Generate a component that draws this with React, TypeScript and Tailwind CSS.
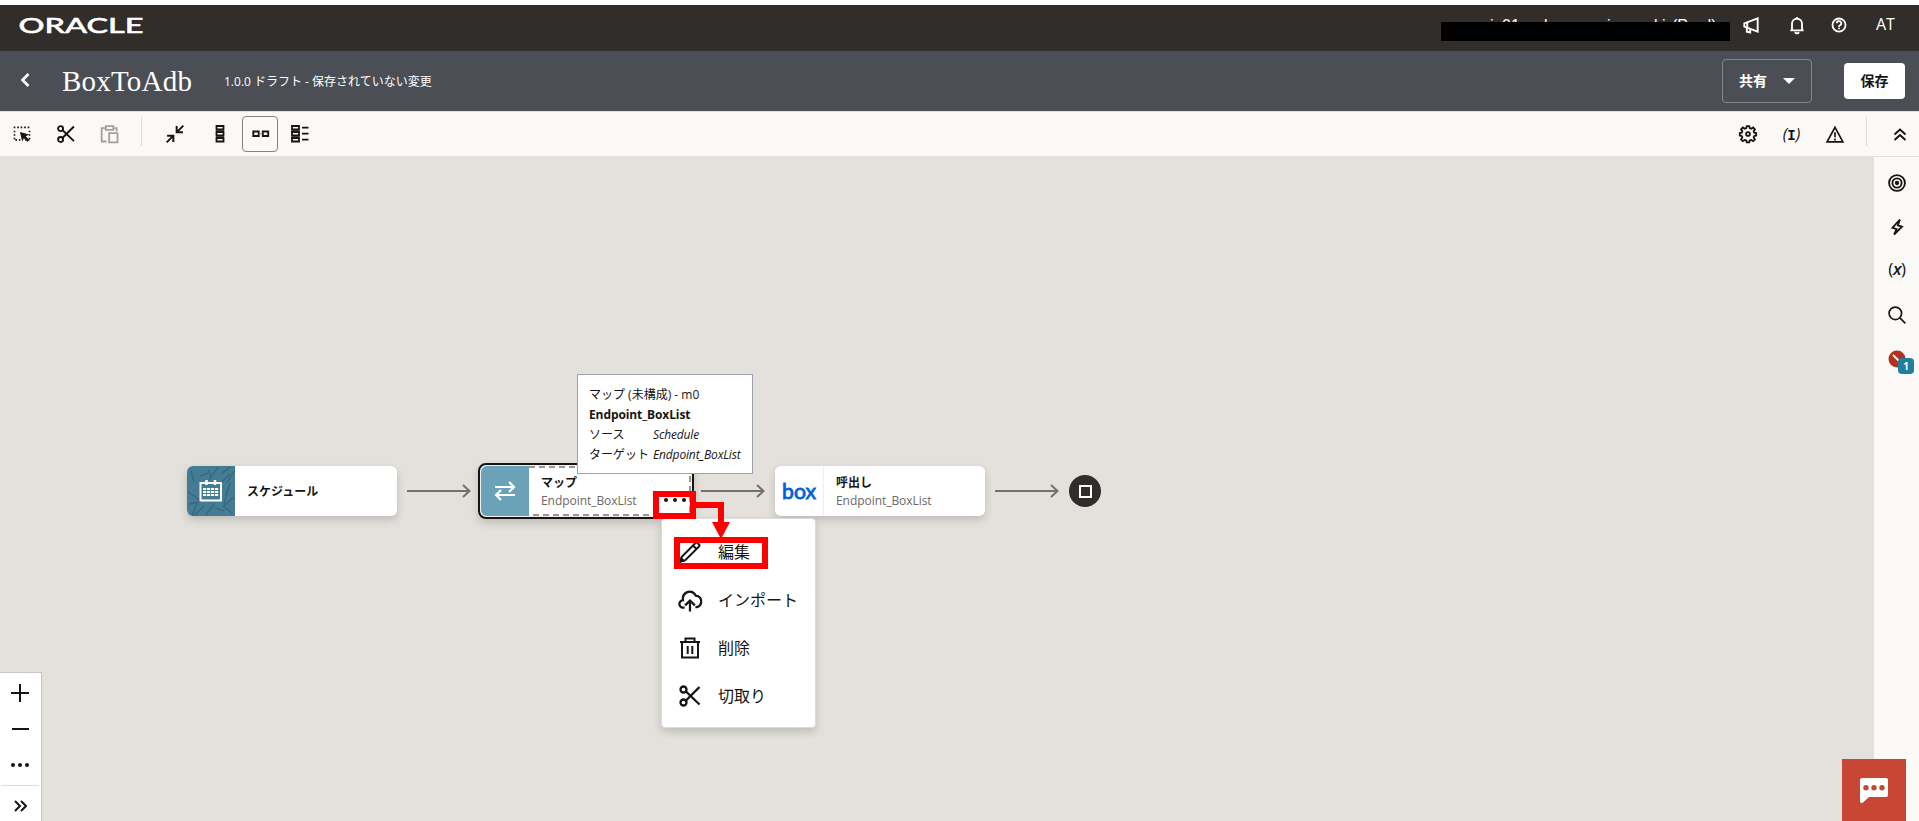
import React from 'react';

interface IconProps {
  className?: string;
  size?: number;
}

interface StrokeIconProps extends IconProps {
  children: React.ReactNode;
  width?: number;
}

// Shared 24x24 outline wrapper
const Icon: React.FC<StrokeIconProps> = ({ children, className = '', size = 20, width = 2 }) => (
  <svg
    width={size}
    height={size}
    viewBox="0 0 24 24"
    fill="none"
    stroke="currentColor"
    strokeWidth={width}
    className={`block shrink-0 ${className}`}
  >
    {children}
  </svg>
);

const ScissorsIcon: React.FC<IconProps> = (props) => (
  <Icon width={2.300} {...props}>
    <circle cx="5.5" cy="5.5" r="3" />
    <circle cx="5.5" cy="18.5" r="3" />
    <path d="M8 7.5 21.5 20.5M8 16.5 21.5 3" />
  </Icon>
);

const SelectIcon = () => (
  <Icon>
    <path d="M2 4h20M3 8v12M21 8v12" strokeDasharray="2 2.2" />
    <path d="M4 19h6M16 19h5" strokeDasharray="2 2.2" />
    <path d="M9.500 9.500l11 3-4 2.300 4.300 4.300-2.300 2.300-4.300-4.300-2 3.900z" fill="currentColor" stroke="none" />
  </Icon>
);

const PasteIcon = () => (
  <Icon className="text-[#a3a19f]" width={2.200}>
    <path d="M8 21H2V5h5M17 5h3v4" />
    <path d="M7 2.500h9V7H7z" />
    <path d="M11 11h10v11H11z" />
  </Icon>
);

const CollapseIcon = () => (
  <Icon width={2.400}>
    <path d="M22 2l-7.500 7.500M14 2.500V10h7.500M2 22l7.500-7.500M2.500 14H10v7.500" />
  </Icon>
);

const VerticalIcon = () => (
  <svg width="10" height="18" className="block" fill="none" stroke="currentColor" strokeWidth="1.8">
    <path d="M5 4.500V7M5 10.500V13" strokeWidth="8" stroke="#6b6966" />
    <path d="M1.500 1h7v3.500h-7zM1.500 7h7v3.500h-7zM1.500 13h7v3.500h-7z" fill="#fbf9f8" />
  </svg>
);

const HorizontalIcon = () => (
  <svg width="18" height="8" className="block" fill="none" stroke="currentColor" strokeWidth="1.900">
    <path d="M1.300 1.500h5.400v4.500H1.300zM10.800 1.500h5.400v4.500h-5.400z" />
    <path d="M7 3.700h3.500" strokeWidth="1" stroke="#888" />
  </svg>
);

const DetailIcon = () => (
  <svg width="18" height="18" className="block" fill="none" stroke="currentColor" strokeWidth="1.800">
    <path d="M4.500 4.500V7M4.500 10.500V13" strokeWidth="8" stroke="#6b6966" />
    <path d="M1 1h7v3.500H1zM1 7h7v3.500H1zM1 13h7v3.500H1z" fill="#fbf9f8" />
    <path d="M11 2.700h6.500M11 8.700h6.500M11 14.700h6.500" />
  </svg>
);

const GearIcon = () => (
  <Icon width={2.200}>
    <path d="M10.500 2.500h3l.6 2.500 1.800.7 2.300-1.500 2.100 2.100-1.500 2.300.7 1.800 2.300.5v3l-2.300.5-.7 1.800 1.500 2.300-2.100 2.100-2.300-1.500-1.800.7-.6 2.200h-3l-.6-2.200-1.800-.7-2.300 1.500-2.100-2.100 1.500-2.300-.7-1.800L2.200 13.900v-3l2.300-.5.7-1.800-1.500-2.300 2.100-2.100 2.300 1.500 1.800-.7z" />
    <circle cx="12" cy="12" r="2.300" />
  </Icon>
);

const WarningIcon = () => (
  <Icon>
    <path d="M12 4 21.500 21.500h-19z" />
    <path d="M12 10v6M12 17.500v2.200" />
  </Icon>
);

const MegaphoneIcon = () => (
  <Icon width={2.300}>
    <path d="M20 4v16L4 14v-4zM7 15v5l4 1v-4" />
    <path d="M7.500 9v6" />
  </Icon>
);

const BellIcon = () => (
  <Icon width={2.200}>
    <path d="M4 18.500h16M6 18v-7.500a6 6 0 0 1 12 0V18M12 2.500v2" />
    <path d="M10 20a2 2 0 0 0 4 0" />
  </Icon>
);

const HelpIcon = () => (
  <Icon size={18} width={2.400}>
    <circle cx="12" cy="12" r="8.700" />
    <path d="M9 9.800a3 3 0 1 1 4.400 2.600c-1 .6-1.400 1-1.400 2.100M12 15.800v2" />
  </Icon>
);

const TargetIcon = () => (
  <Icon width={2.200}>
    <circle cx="12" cy="12" r="9.500" />
    <circle cx="12" cy="12" r="5.500" />
    <circle cx="12" cy="12" r="1.500" fill="currentColor" />
  </Icon>
);

const BoltIcon = () => (
  <Icon width={2.200}>
    <path d="M15.500 3 6.500 13l5 1.500-3 6.500 9.500-9.500-5-1.500z" />
  </Icon>
);

const SearchIcon = () => (
  <Icon>
    <circle cx="10" cy="10" r="7.500" />
    <path d="m15.500 15.500 6.500 6.500" />
  </Icon>
);

const CalendarIcon = () => (
  <svg width="24" height="24" className="relative block" fill="none" stroke="white">
    <path d="M1.500 4h20.500v17.500H1.500z" strokeWidth="2" />
    <path d="M7.500 1v5M16 1v5" strokeWidth="2.500" />
    <path d="M4 10h15.500M4 13h15.500M4 16h15.500" strokeWidth="1.800" strokeDasharray="3.200 .8" />
  </svg>
);

const SwapIcon = () => (
  <svg width="22" height="20" className="block" fill="none" stroke="white" strokeWidth="2.200">
    <path d="M1 6h19M15 1l5 5-5 5M21 14H2M7 9l-5 5 5 5" />
  </svg>
);

const PencilIcon = () => (
  <Icon size={24}>
    <path d="m2.500 21.500 1.300-4.800L17.500 3q1-1 2 0l1.500 1.500q1 1 0 2L7.300 20.200zM15 5.500 18.500 9" />
    <path d="M2.500 21.500l3-.8-2.200-2.200z" fill="currentColor" />
  </Icon>
);

const CloudUpIcon = () => (
  <Icon size={26} width={2.100}>
    <path d="M7 19H4.500C2 18 1.500 15 3 13.500c.8-.9 1.600-1.300 2.500-1.300-.5-3.200 1-6.200 4-7.500 3.200-1.300 6.500.2 7.800 3.300 3.500.2 5.500 2.700 5 6-.3 2.400-2 4.200-4 4.500H17" />
    <path d="M12 22.500v-9M7.500 17 12 12.500l4.500 4.500" />
  </Icon>
);

const TrashIcon = () => (
  <Icon size={24}>
    <path d="M2 6h20M7.500 6V2.500h9V6M4 6v15.500h16V6M9.700 10v8M14.300 10v8" />
  </Icon>
);

const ChatIcon = () => (
  <svg width="28" height="25" viewBox="0 0 28 25" className="block">
    <path d="M2 0h24q2 0 2 2v15q0 2-2 2H9l-6 5.500Q0 26 0 23V2q0-2 2-2z" fill="white" />
    <g fill="#c74634">
      <circle cx="6" cy="9.700" r="2.700" />
      <circle cx="14" cy="9.700" r="2.700" />
      <circle cx="22" cy="9.700" r="2.700" />
    </g>
  </svg>
);

const FlowArrow = () => (
  <svg width="66" height="14" className="mx-[9px] block shrink-0" fill="none" stroke="#76706b" strokeWidth="2">
    <path d="M1 7h62.500M57 1l6.500 6-6.500 6" />
  </svg>
);

const menuItems = [
  { label: '編集', icon: <PencilIcon /> },
  { label: 'インポート', icon: <CloudUpIcon /> },
  { label: '削除', icon: <TrashIcon /> },
  { label: '切取り', icon: <ScissorsIcon size={24} /> },
];

const Header = () => (
  <header className="flex h-[46px] shrink-0 items-start justify-between bg-[#312d2a] text-white">
    <svg width="160" height="46" className="block" role="img" aria-label="Oracle">
      <text
        x="18.500"
        y="27.500"
        fill="white"
        stroke="white"
        strokeWidth=".5"
        fontSize="21.500"
        fontFamily="Lato, sans-serif"
        fontWeight="500"
        textLength="125"
        lengthAdjust="spacingAndGlyphs"
      >
        ORACLE
      </text>
    </svg>
    <div className="flex items-start">
      <div className="relative mt-[11px] h-[25px] w-[289px] text-[16px] leading-5 [font-family:'Liberation_Sans',sans-serif]">
        <div className="flex">
          <span className="ml-[49px] w-[12px]">i</span>
          <span className="w-[42px]">01</span>
          <span className="w-[63px]">l</span>
          <span className="w-[47px]">i</span>
          <span className="w-[18px]">ki</span>
          <span>(Prod)</span>
        </div>
        <div className="absolute top-[6px] left-0 h-[19px] w-[289px] bg-black" />
      </div>
      <div className="mt-[10px] ml-[11px] flex items-center">
        <MegaphoneIcon />
        <span className="ml-[26px]"><BellIcon /></span>
        <span className="ml-[23px]"><HelpIcon /></span>
      </div>
      <span className="mt-[9px] mr-[23px] ml-[28px] w-[20px] text-base leading-5">AT</span>
    </div>
  </header>
);

const TitleBar = () => (
  <div className="flex h-[60px] shrink-0 items-center bg-[#4b4e54] text-white">
    <svg width="12" height="16" className="mt-[-2px] ml-[19px]" fill="none" stroke="white" strokeWidth="2.600">
      <path d="M9.500 2 3.500 8l6 6" />
    </svg>
    <h1 className="ml-[31px] w-[162px] text-[29px] leading-8 tracking-[0.200px] whitespace-nowrap [font-family:'Liberation_Serif',serif]">
      BoxToAdb
    </h1>
    <span className="pt-px text-[12px]">1.0.0 ドラフト - 保存されていない変更</span>
    <button className="ml-auto flex h-[44px] w-[90px] items-center rounded border border-[#85878b] pl-[16px] text-[14px] font-bold">
      <span className="-mt-[2px]">共有</span>
      <svg width="14" height="8" className="ml-[15px]" fill="white">
        <path d="M1 1h12L7 7z" />
      </svg>
    </button>
    <button className="mr-[14px] ml-[32px] h-[36px] w-[61px] rounded bg-white pb-[2px] text-[14px] font-bold text-[#161513]">
      保存
    </button>
  </div>
);

const Toolbar = () => (
  <div className="flex h-[46px] shrink-0 items-center border-y border-[#e3e0dc] bg-[#fbf9f8] pl-[12px]">
    <div className="w-[44px]"><SelectIcon /></div>
    <div className="w-[44px]"><ScissorsIcon /></div>
    <div className="w-[41px]"><PasteIcon /></div>
    <div className="mb-[6px] h-[29px] w-px bg-[#dedbd8]" />
    <div className="ml-[23px]"><CollapseIcon /></div>
    <div className="ml-[30px]"><VerticalIcon /></div>
    <div className="ml-[17px] flex size-[36px] items-center justify-center rounded border border-[#85817e] pl-px">
      <HorizontalIcon />
    </div>
    <div className="ml-[13px]"><DetailIcon /></div>
    <div className="ml-auto"><GearIcon /></div>
    <span className="ml-[24px] w-[19px] text-center text-[16px] font-medium italic">
      (<span className="text-[14px] font-bold not-italic [font-family:'Liberation_Mono',monospace]">I</span>)
    </span>
    <div className="ml-[24px]"><WarningIcon /></div>
    <div className="mb-[6px] ml-[21px] h-[29px] w-px bg-[#dedbd8]" />
    <svg width="14" height="14" className="mr-[12px] ml-[26px]" fill="none" stroke="currentColor" strokeWidth="2">
      <path d="m1.500 7.500 5.500-5 5.500 5M1.500 13 7 8l5.500 5" />
    </svg>
  </div>
);

const NodeTitle = ({ title, sub }: { title: string; sub?: string }) => (
  <div className="flex flex-col justify-center pt-[2px] pl-[12px]">
    <span className="text-[12px] leading-[18px] font-bold text-[#161513]">{title}</span>
    {sub && <span className="text-[12px] leading-[18px] tracking-[-0.050px] text-[#6b6966]">{sub}</span>}
  </div>
);

const ScheduleNode = () => (
  <div className="flex h-[50px] w-[210px] shrink-0 overflow-hidden rounded-md bg-white shadow-[0_4px_8px_rgba(0,0,0,0.16)]">
    <div className="relative flex w-[48px] items-center justify-center bg-[#437c94]">
      <svg width="48" height="50" className="absolute inset-0" fill="none" stroke="#37677b" strokeWidth="1.300">
        <path d="M4 5l3 11M13 10l8-3M31 1l-9 13M22 4l2 8M35 7l8-6M34 17l9-9M47 5l-7 12M1 26l13 9M2 38l14-3M10 37l-5 13M17 40l-9 9M27 38l-8 11M28 42l9 3M40 25l-3 14M47 31l-10 9M36 40l9 7M43 17l-4 13" />
      </svg>
      <CalendarIcon />
    </div>
    <NodeTitle title="スケジュール" />
  </div>
);

const MapNode = () => (
  <div className="relative h-[50px] w-[210px] shrink-0">
    <div className="absolute -inset-[3px] rounded-lg border-2 border-[#161513] bg-[#f1efed] shadow-[0_4px_8px_rgba(0,0,0,0.16)]" />
    <div className="relative flex h-full overflow-hidden rounded-md bg-white">
      <div className="flex w-[48px] items-center justify-center bg-[#6ba2b8]">
        <SwapIcon />
      </div>
      <NodeTitle title="マップ" sub="Endpoint_BoxList" />
      <svg width="162" height="50" className="absolute top-0 right-0" fill="none" stroke="#9a9692" strokeWidth="2">
        <path d="M0 1h161v48H0" strokeDasharray="6 4" />
      </svg>
    </div>
    <div className="absolute right-[5px] bottom-[14px] flex gap-[5px]">
      <i className="size-[4px] rounded-full bg-[#161513]" />
      <i className="size-[4px] rounded-full bg-[#161513]" />
      <i className="size-[4px] rounded-full bg-[#161513]" />
    </div>

    {/* Hover card */}
    <div className="absolute -top-[92px] left-[96px] h-[100px] w-[176px] border border-[#9ca0b0] bg-white px-[11px] pt-[10px] text-[12px] leading-5 whitespace-nowrap text-[#161513]">
      <p>マップ (未構成) - m0</p>
      <p className="font-bold tracking-[-0.100px]">Endpoint_BoxList</p>
      <p className="flex"><span className="w-[64px]">ソース</span><em className="tracking-[-0.150px]">Schedule</em></p>
      <p className="flex"><span className="w-[64px]">ターゲット</span><em className="tracking-[-0.150px]">Endpoint_BoxList</em></p>
    </div>

    {/* Action menu */}
    <div className="absolute top-[52px] left-[180px] z-10 flex h-[210px] w-[155px] flex-col rounded border border-[#dedbd8] bg-white pt-[9px] shadow-[0_4px_8px_rgba(0,0,0,0.16)]">
      {menuItems.map((item) => (
        <div key={item.label} className="flex h-[48px] items-center pl-[16px] text-[16px] text-[#161513]">
          <span className="flex w-[24px] justify-center">{item.icon}</span>
          <span className="ml-[16px] -mt-px">{item.label}</span>
        </div>
      ))}
    </div>

    {/* Step annotations */}
    <div className="absolute top-[25px] left-[172px] z-20 h-[28px] w-[43px] border-6 border-[#ff0000]" />
    <div className="absolute top-[71px] left-[193px] z-20 h-[32px] w-[94px] border-6 border-[#ff0000]" />
    <svg width="40" height="42" className="absolute top-[33px] left-[212px] z-20">
      <path d="M0 6h28v18" fill="none" stroke="#ff0000" strokeWidth="6" />
      <path d="M19 23h18L28 40z" fill="#ff0000" />
    </svg>
  </div>
);

const InvokeNode = () => (
  <div className="flex h-[50px] w-[210px] shrink-0 overflow-hidden rounded-md bg-white shadow-[0_4px_8px_rgba(0,0,0,0.16)]">
    <div className="w-[49px] border-r border-[#f1efed]">
      <svg width="46" height="50" className="block" role="img" aria-label="box">
        <text
          x="7"
          y="33"
          fill="#0061d5"
          stroke="#0061d5"
          strokeWidth=".8"
          fontSize="22"
          fontFamily="Lato, sans-serif"
          textLength="34"
          lengthAdjust="spacingAndGlyphs"
        >
          box
        </text>
      </svg>
    </div>
    <NodeTitle title="呼出し" sub="Endpoint_BoxList" />
  </div>
);

const Canvas = () => (
  <main className="relative min-w-0 flex-1 overflow-hidden bg-[#e4e1dc]">
    <div className="absolute top-[309px] left-[187px] flex items-center">
      <ScheduleNode />
      <FlowArrow />
      <MapNode />
      <FlowArrow />
      <InvokeNode />
      <FlowArrow />
      <div className="flex size-[32px] items-center justify-center rounded-full bg-[#312d2a]">
        <div className="size-[13px] border-2 border-white" />
      </div>
    </div>

    {/* Zoom controls */}
    <div className="absolute bottom-0 left-0 flex h-[149px] w-[42px] flex-col items-center border-t border-r border-[#c9c5c1] bg-white pr-px">
      <svg width="18" height="18" className="mt-[11px]" stroke="currentColor" strokeWidth="2">
        <path d="M0 9h18M9 0v18" />
      </svg>
      <div className="mt-[26px] h-[2px] w-[17px] bg-[#161513]" />
      <div className="mt-[33px] flex gap-[3px]">
        <i className="size-[4px] rounded-full bg-[#161513]" />
        <i className="size-[4px] rounded-full bg-[#161513]" />
        <i className="size-[4px] rounded-full bg-[#161513]" />
      </div>
      <div className="mt-[18px] h-px w-[38px] bg-[#dedbd8]" />
      <svg width="13" height="12" className="mt-[14px]" fill="none" stroke="currentColor" strokeWidth="2">
        <path d="m1 1 5 5-5 5M7 1l5 5-5 5" />
      </svg>
    </div>
  </main>
);

const SideRail = () => (
  <aside className="flex w-[45px] shrink-0 flex-col items-center bg-[#fbf9f8] pt-[16px] pl-px">
    <TargetIcon />
    <span className="mt-[24px]"><BoltIcon /></span>
    <span className="mt-[22px] h-[20px] text-[17px] leading-5 tracking-tight">(<em className="font-semibold">x</em>)</span>
    <span className="mt-[26px]"><SearchIcon /></span>
    <div className="relative mt-[25px] size-[18px]">
      <svg width="18" height="18" className="block">
        <circle cx="9" cy="9" r="8.500" fill="#b3311f" />
        <path d="m5 5 8 8" stroke="white" strokeWidth="2" />
      </svg>
      <span className="absolute top-[8px] left-[10px] flex size-[16px] items-center justify-center rounded bg-[#227e9e] pb-px text-[10px] leading-none font-bold text-white">
        1
      </span>
    </div>
  </aside>
);

export default function App() {
  return (
    <div className="relative flex h-screen w-full flex-col overflow-hidden bg-white pt-[5px] text-[#161513] [font-family:'Open_Sans','Noto_Sans_CJK_JP',sans-serif]">
      <Header />
      <TitleBar />
      <Toolbar />
      <div className="flex min-h-0 flex-1">
        <Canvas />
        <SideRail />
      </div>

      {/* Chat launcher */}
      <button className="absolute right-[13px] bottom-0 flex h-[62px] w-[64px] items-center justify-center bg-[#c74634]">
        <ChatIcon />
      </button>
    </div>
  );
}
